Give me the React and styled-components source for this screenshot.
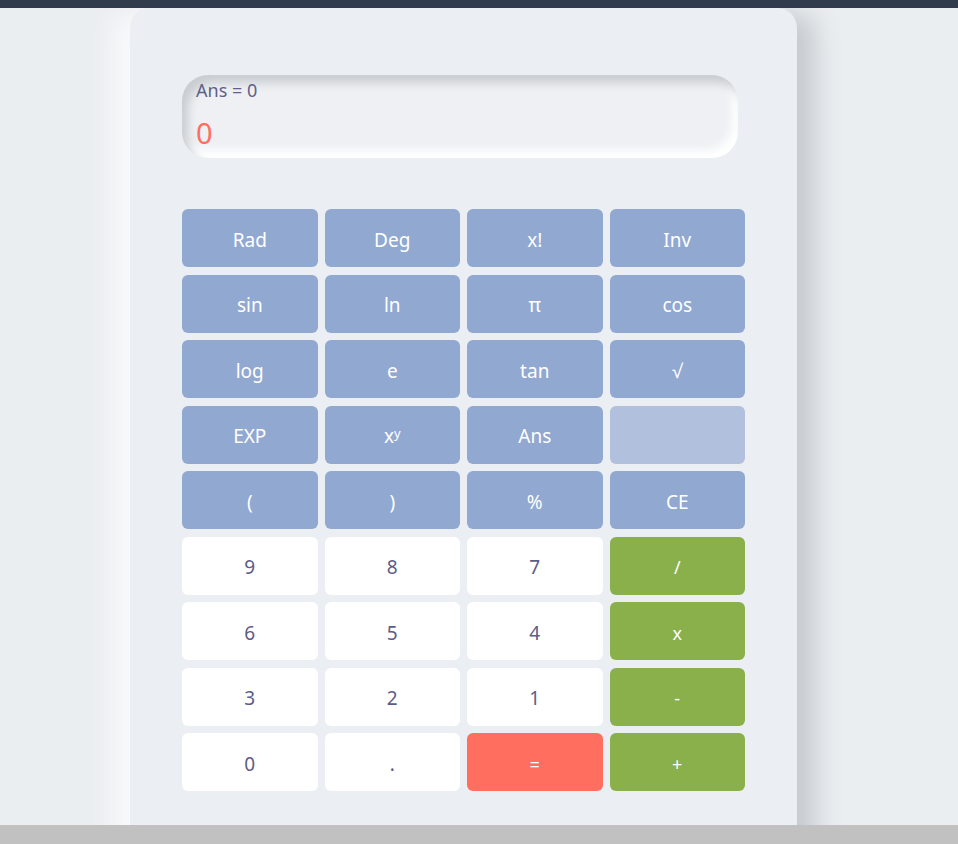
import React from 'react'
import styled, { createGlobalStyle } from 'styled-components'

const GlobalStyle = createGlobalStyle`
  * { box-sizing: border-box; }
  html, body {
    margin: 0;
    padding: 0;
    background: #ebeef1;
    font-family: 'Noto Sans', 'Open Sans', sans-serif;
  }
`

const keys = [
  { label: 'Rad', kind: 'fn' },
  { label: 'Deg', kind: 'fn' },
  { label: 'x!', kind: 'fn' },
  { label: 'Inv', kind: 'fn' },
  { label: 'sin', kind: 'fn' },
  { label: 'ln', kind: 'fn' },
  { label: 'π', kind: 'fn' },
  { label: 'cos', kind: 'fn' },
  { label: 'log', kind: 'fn' },
  { label: 'e', kind: 'fn' },
  { label: 'tan', kind: 'fn' },
  { label: '√', kind: 'fn' },
  { label: 'EXP', kind: 'fn' },
  { label: 'pow', kind: 'fn' },
  { label: 'Ans', kind: 'fn' },
  { label: '', kind: 'blank' },
  { label: '(', kind: 'fn' },
  { label: ')', kind: 'fn' },
  { label: '%', kind: 'fn' },
  { label: 'CE', kind: 'fn' },
  { label: '9', kind: 'num' },
  { label: '8', kind: 'num' },
  { label: '7', kind: 'num' },
  { label: '/', kind: 'op' },
  { label: '6', kind: 'num' },
  { label: '5', kind: 'num' },
  { label: '4', kind: 'num' },
  { label: 'x', kind: 'op' },
  { label: '3', kind: 'num' },
  { label: '2', kind: 'num' },
  { label: '1', kind: 'num' },
  { label: '-', kind: 'op' },
  { label: '0', kind: 'num' },
  { label: '.', kind: 'num' },
  { label: '=', kind: 'eq' },
  { label: '+', kind: 'op' },
]

const colors = {
  fn: { bg: '#91a8d1', fg: '#ffffff' },
  blank: { bg: '#b0c0dd', fg: '#ffffff' },
  num: { bg: '#ffffff', fg: '#5c5c88' },
  op: { bg: '#89b04b', fg: '#ffffff' },
  eq: { bg: '#ff6e5f', fg: '#ffffff' },
}

export default function App() {
  return (
    <>
      <GlobalStyle />
      <Page>
        <TopBar />
        <Main>
          <Card>
            <Display>
              <History>Ans = 0</History>
              <Result>0</Result>
            </Display>
            <Keypad>
              {keys.map((k, i) => (
                <Key key={i} kind={k.kind}>
                  {k.label === 'pow' ? (
                    <>
                      x<sup>y</sup>
                    </>
                  ) : (
                    k.label
                  )}
                </Key>
              ))}
            </Keypad>
          </Card>
        </Main>
        <BottomBar />
      </Page>
    </>
  )
}

const Page = styled.div`
  height: 844px;
  display: flex;
  flex-direction: column;
  overflow: hidden;
`

const TopBar = styled.div`
  height: 8px;
  flex: none;
  background: #303b4c;
`

const Main = styled.main`
  flex: 1;
  overflow: hidden;
  padding-left: 130px;
`

const Card = styled.div`
  width: 667px;
  height: 900px;
  background: #ebeef2;
  border-radius: 20px 20px 0 0;
  padding: 67px 52px 0 52px;
  box-shadow: -22px 0 26px -6px #f9fafb, 24px 0 28px -6px #c4c9cf;
`

const Display = styled.div`
  width: 556px;
  height: 83px;
  border-radius: 26px;
  padding: 4px 14px 0 14px;
  background: #eef0f3;
  box-shadow: inset 6px 8px 10px #c9cdd1, inset -6px -8px 10px #ffffff;
  display: flex;
  flex-direction: column;
`

const History = styled.div`
  font-size: 18px;
  line-height: 22px;
  color: #5f5f88;
`

const Result = styled.div`
  margin-top: 12px;
  font-size: 29px;
  line-height: 40px;
  color: #ff6e5f;
`

const Keypad = styled.div`
  margin-top: 51px;
  width: 563px;
  display: grid;
  grid-template-columns: repeat(4, 1fr);
  grid-auto-rows: 58px;
  gap: 7.5px 7px;
`

const Key = styled.div`
  display: flex;
  align-items: center;
  justify-content: center;
  padding-top: 3px;
  border-radius: 6px;
  background: ${(p) => colors[p.kind].bg};
  color: ${(p) => colors[p.kind].fg};
  font-size: ${(p) => (p.kind === 'op' || p.kind === 'eq' ? '18px' : '19px')};

  sup {
    font-size: 13px;
    line-height: 0;
    position: relative;
    top: -3px;
    vertical-align: super;
  }
`

const BottomBar = styled.div`
  height: 19px;
  flex: none;
  background: #c1c1c1;
`
